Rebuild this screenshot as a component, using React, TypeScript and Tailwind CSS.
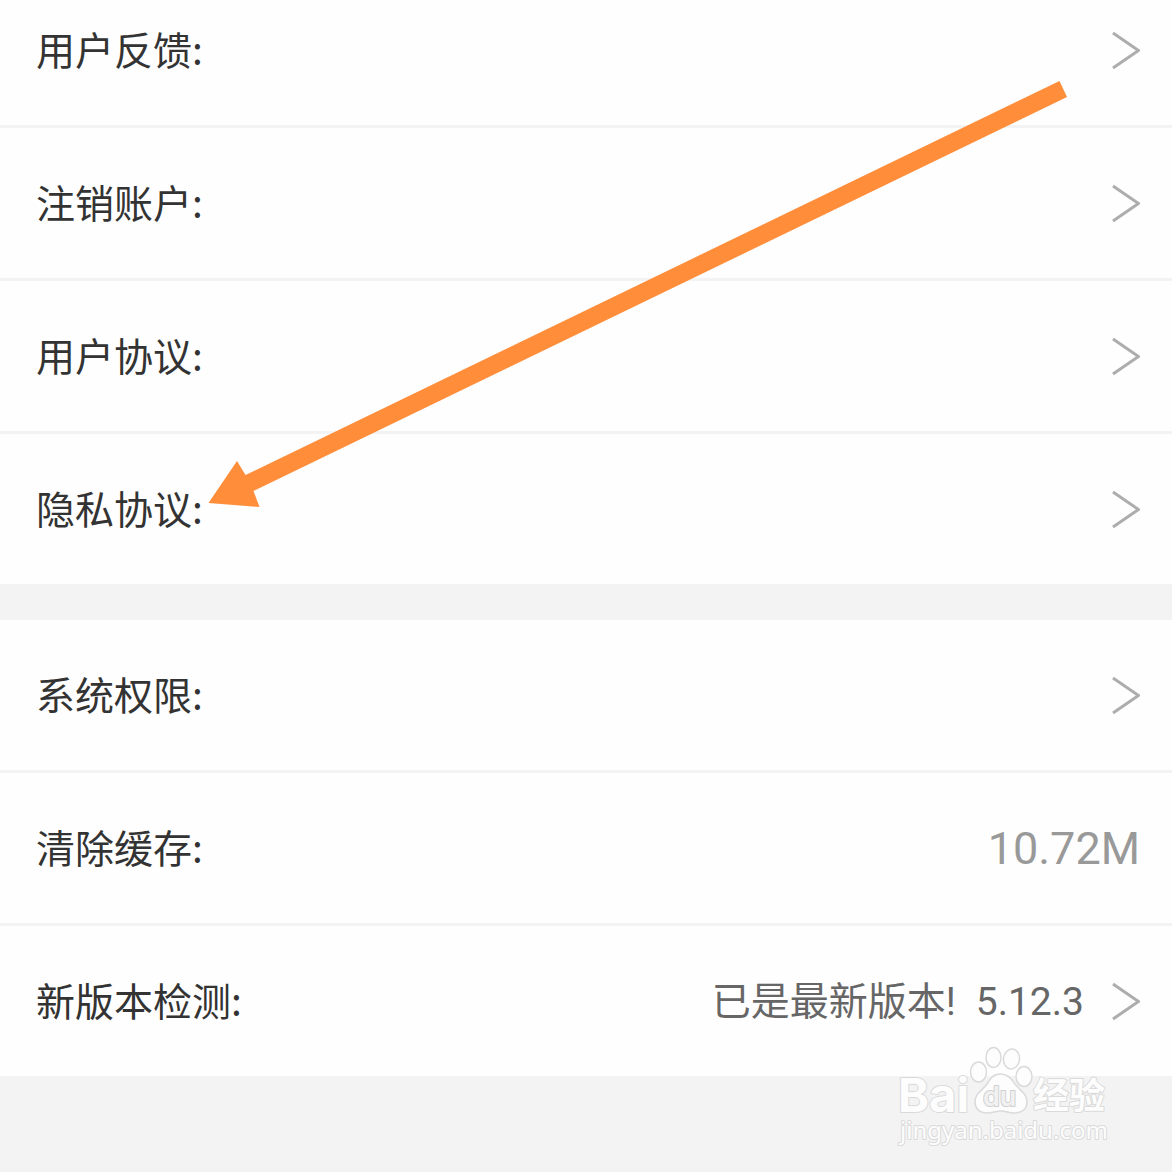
import type { ReactNode } from "react";

interface SettingRowProps {
  label: string;
  value?: ReactNode;
  arrow?: boolean;
}

function ChevronRight() {
  return (
    <svg
      className="h-10 w-7 flex-shrink-0"
      viewBox="0 0 28 40"
      fill="none"
      aria-hidden="true"
    >
      <path d="M1 3L26.5 20.5L1 38" stroke="#adadad" strokeWidth="3" />
    </svg>
  );
}

function SettingRow({ label, value, arrow = true }: SettingRowProps) {
  return (
    <li>
      <button
        type="button"
        className="flex h-[150px] w-full cursor-pointer items-center justify-between pl-9 pr-8 text-left"
      >
        <span className="pb-1 text-[39px] leading-[56px] text-[#333333]">
          {label}
        </span>
        <span className="flex items-center gap-x-7">
          {value}
          {arrow && <ChevronRight />}
        </span>
      </button>
    </li>
  );
}

function SettingGroup({ children }: { children: ReactNode }) {
  return (
    <ul className="divide-y-[3px] divide-[#f3f3f3] bg-[#fefefe]">{children}</ul>
  );
}

function PointerArrow() {
  return (
    <svg
      className="pointer-events-none absolute left-[200px] top-[70px]"
      width="880"
      height="450"
      viewBox="200 70 880 450"
      aria-hidden="true"
    >
      <path
        d="M208.500 503L237 461L245.500 475L1059.500 81L1067 97L253.500 491L259.500 507Z"
        fill="#ff8d3a"
      />
    </svg>
  );
}

function Watermark() {
  return (
    <svg
      className="pointer-events-none absolute right-[42px] top-[1030px]"
      width="250"
      height="130"
      viewBox="0 0 250 130"
      fill="#fdfdfd"
      stroke="#dadada"
      strokeWidth="1.5"
      strokeLinejoin="round"
      role="img"
      aria-label="Baidu 经验"
    >
      <g>
        <ellipse cx="98.500" cy="42" rx="8" ry="10" />
        <ellipse cx="113.500" cy="27.500" rx="7.500" ry="10" />
        <ellipse cx="131.500" cy="29" rx="8" ry="10" transform="rotate(8 131.5 29)" />
        <ellipse cx="144" cy="46.500" rx="8" ry="10" />
        <path d="M120.500 44C128 44 132 49 135 54C139 60 147 63 147 72C147 80 141 83 134 83C129 83 126 81 121 81C116 81 112 83 107 83C99 83 95 78 95 72C95 63 103 60 107 54C110 49 113 44 120.500 44Z" />
      </g>
      <g style={{ paintOrder: "stroke" }} strokeWidth="2">
        <text x="18" y="82" className="font-[Inter,sans-serif] text-[47px] font-bold">
          Bai
        </text>
        <text
          x="103"
          y="76"
          fill="#f1f1f1"
          stroke="#d0d0d0"
          className="font-[Inter,sans-serif] text-[27px] font-semibold"
        >
          du
        </text>
        <text x="153" y="79" className="text-[36px] font-bold">
          经验
        </text>
        <text x="20" y="109" className="font-['Noto_Sans',sans-serif] text-[24px]">
          jingyan.baidu.com
        </text>
      </g>
    </svg>
  );
}

export default function App() {
  return (
    <main className="relative min-h-screen overflow-hidden bg-[#f3f3f3] font-['Noto_Sans_CJK_SC',sans-serif]">
      {/* the list is scrolled a little, so the first row is cut at the top */}
      <div className="-mt-[25px] flex flex-col gap-y-9 pb-24">
        <SettingGroup>
          <SettingRow label="用户反馈:" />
          <SettingRow label="注销账户:" />
          <SettingRow label="用户协议:" />
          <SettingRow label="隐私协议:" />
        </SettingGroup>

        <SettingGroup>
          <SettingRow label="系统权限:" />
          <SettingRow
            label="清除缓存:"
            arrow={false}
            value={
              <span className="pt-0.5 font-[Roboto,sans-serif] text-[45px] leading-[56px] text-[#999999]">
                10.72M
              </span>
            }
          />
          <SettingRow
            label="新版本检测:"
            value={
              <span className="flex gap-x-5 pt-0.5 font-[Roboto,'Noto_Sans_CJK_SC',sans-serif] text-[39px] leading-[56px] text-[#666666]">
                <span>已是最新版本!</span>
                <span>5.12.3</span>
              </span>
            }
          />
        </SettingGroup>
      </div>

      <PointerArrow />
      <Watermark />
    </main>
  );
}
